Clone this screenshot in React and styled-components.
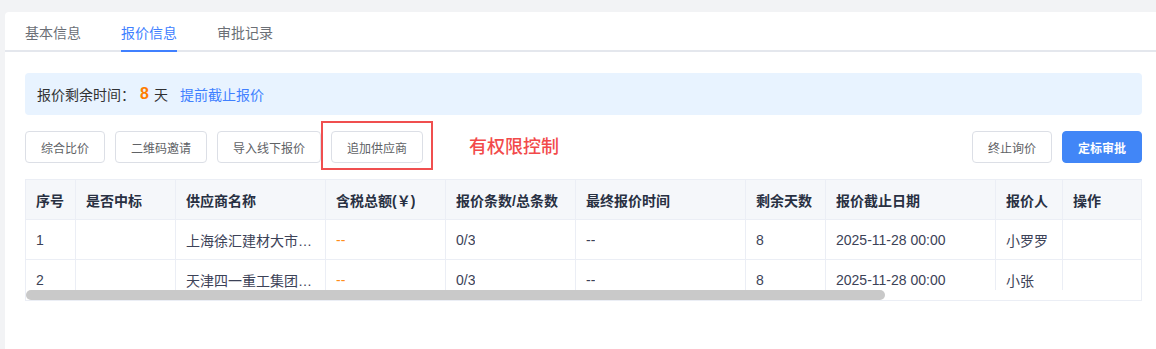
import React, { useState } from 'react';
import styled, { createGlobalStyle } from 'styled-components';

const GlobalStyle = createGlobalStyle`
  html, body {
    margin: 0;
    padding: 0;
    background: #f2f3f5;
    overflow: hidden;
    font-family: "Liberation Sans", "Noto Sans CJK SC", sans-serif;
  }
`;

const Page = styled.div`
  padding: 12px 0 0 5px;
  height: 349px;
  box-sizing: border-box;
`;

const Card = styled.div`
  width: 1157px;
  min-height: 337px;
  background: #fff;
  border-radius: 4px 0 0 0;
`;

// tabs
const TabBar = styled.div`
  display: flex;
  height: 38px;
  padding: 0 20px;
  border-bottom: 2px solid #e4e7ed;
`;

const Tab = styled.div`
  position: relative;
  display: flex;
  align-items: center;
  padding: 2px 20px 0;
  font-size: 14px;
  color: ${({ active }) => (active ? '#4080ff' : '#6b6f76')};
  cursor: pointer;

  &:first-child {
    padding-left: 0;
  }

  &::after {
    content: '';
    display: ${({ active }) => (active ? 'block' : 'none')};
    position: absolute;
    left: 20px;
    right: 20px;
    bottom: -2px;
    height: 2px;
    background: #4080ff;
  }
`;

const Body = styled.div`
  padding: 21px 20px 0 20px;
`;

// notice bar
const Notice = styled.div`
  display: flex;
  align-items: center;
  height: 42px;
  padding: 0 12px;
  background: #e8f3ff;
  border-radius: 4px;
  font-size: 14px;
  color: #303133;
`;

const Days = styled.span`
  margin: 0 5px;
  font-size: 16px;
  font-weight: 700;
  color: #ff7d00;
`;

const Link = styled.a`
  margin-left: 12px;
  color: #4080ff;
  cursor: pointer;
`;

// toolbar
const Toolbar = styled.div`
  display: flex;
  align-items: flex-start;
  justify-content: space-between;
  margin-top: 16px;
`;

const Group = styled.div`
  display: flex;
  align-items: flex-start;
  gap: 10px;
`;

const Button = styled.button`
  height: 32px;
  padding: 0 15px;
  font-family: inherit;
  font-size: 12px;
  font-weight: ${({ primary }) => (primary ? 600 : 400)};
  color: ${({ primary }) => (primary ? '#fff' : '#606266')};
  background: ${({ primary }) => (primary ? '#4186f7' : '#fff')};
  border: 1px solid ${({ primary }) => (primary ? '#4186f7' : '#dcdfe6')};
  border-radius: 4px;
  cursor: pointer;
  white-space: nowrap;
`;

const Marked = styled.div`
  display: flex;
  margin: -10px -10px -7px;
  padding: 8px 8px 5px;
  border: 2px solid #f04f4f;
`;

const Note = styled.span`
  margin-left: 36px;
  line-height: 32px;
  font-size: 18px;
  font-weight: 500;
  color: #f24a4a;
`;

// table
const TableBox = styled.div`
  margin-top: 16px;
  border: 1px solid #ebeef5;
`;

const Viewport = styled.div`
  height: 110px;
  overflow: hidden;
`;

const Row = styled.div`
  display: grid;
  grid-template-columns: 50px 100px 150px 120px 130px 170px 80px 170px 67px 1fr;
  height: 40px;
  background: ${({ head }) => (head ? '#f5f7fa' : '#fff')};
  font-size: 14px;
  font-weight: ${({ head }) => (head ? 700 : 400)};
  color: ${({ head }) => (head ? '#283042' : '#3c4257')};
`;

const Cell = styled.div`
  display: flex;
  align-items: center;
  padding: 0 10px;
  border-right: 1px solid #ebeef5;
  border-bottom: 1px solid #ebeef5;
  color: ${({ tone }) => (tone === 'orange' ? '#ff8d1a' : 'inherit')};
  min-width: 0;

  &:last-child {
    border-right: none;
  }

  span {
    overflow: hidden;
    white-space: nowrap;
    text-overflow: ellipsis;
  }
`;

const Track = styled.div`
  height: 10px;
  background: #fff;
`;

const Thumb = styled.div`
  height: 10px;
  border-radius: 5px;
  background: #c9c9c9;
`;

const columns = ['序号', '是否中标', '供应商名称', '含税总额(￥)', '报价条数/总条数', '最终报价时间', '剩余天数', '报价截止日期', '报价人', '操作'];

const rows = [
  { no: 1, win: '', name: '上海徐汇建材大市场有限公司', amount: '--', count: '0/3', last: '--', days: 8, deadline: '2025-11-28 00:00', person: '小罗罗' },
  { no: 2, win: '', name: '天津四一重工集团有限公司', amount: '--', count: '0/3', last: '--', days: 8, deadline: '2025-11-28 00:00', person: '小张' },
];

const tabs = ['基本信息', '报价信息', '审批记录'];

const App = () => {
  const [active, setActive] = useState(1);
  const scrollRatio = 1115 / 1448;

  return (
    <>
      <GlobalStyle />
      <Page>
        <Card>
          <TabBar>
            {tabs.map((t, i) => (
              <Tab key={t} active={i === active} onClick={() => setActive(i)}>
                {t}
              </Tab>
            ))}
          </TabBar>

          <Body>
            <Notice>
              报价剩余时间：<Days>8</Days>天<Link>提前截止报价</Link>
            </Notice>

            <Toolbar>
              <Group>
                <Button>综合比价</Button>
                <Button>二维码邀请</Button>
                <Button>导入线下报价</Button>
                <Marked>
                  <Button>追加供应商</Button>
                </Marked>
                <Note>有权限控制</Note>
              </Group>
              <Group>
                <Button>终止询价</Button>
                <Button primary>定标审批</Button>
              </Group>
            </Toolbar>

            <TableBox>
              <Viewport>
                <Row head>
                  {columns.map((c) => (
                    <Cell key={c}><span>{c}</span></Cell>
                  ))}
                </Row>
                {rows.map((r) => (
                  <Row key={r.no}>
                    <Cell><span>{r.no}</span></Cell>
                    <Cell><span>{r.win}</span></Cell>
                    <Cell><span>{r.name}</span></Cell>
                    <Cell tone="orange"><span>{r.amount}</span></Cell>
                    <Cell><span>{r.count}</span></Cell>
                    <Cell><span>{r.last}</span></Cell>
                    <Cell><span>{r.days}</span></Cell>
                    <Cell><span>{r.deadline}</span></Cell>
                    <Cell><span>{r.person}</span></Cell>
                    <Cell />
                  </Row>
                ))}
              </Viewport>
              <Track>
                <Thumb style={{ width: `${scrollRatio * 100}%` }} />
              </Track>
            </TableBox>
          </Body>
        </Card>
      </Page>
    </>
  );
};

export default App;
